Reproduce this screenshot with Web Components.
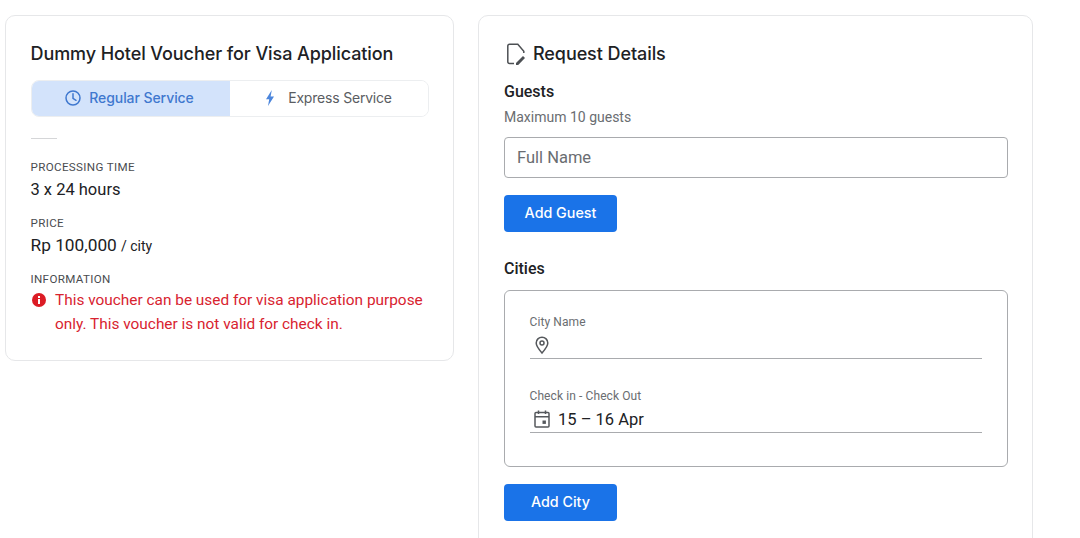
<!DOCTYPE html>
<html lang="en"><head><meta charset="utf-8"><title>Voucher</title>
<style>
html,body{margin:0;height:538px;overflow:hidden;background:#fff;font-family:Roboto,sans-serif;color:#202124}
</style></head><body>
<voucher-page>
  <voucher-card></voucher-card>
  <request-card></request-card>
</voucher-page>
<script>
const css=`*{box-sizing:border-box}:host{box-sizing:border-box}`;
function def(name,html){customElements.define(name,class extends HTMLElement{constructor(){super();this.attachShadow({mode:'open'}).innerHTML=html;}});}
def('voucher-page',`<style>${css}:host{display:flex;align-items:flex-start;gap:24px;padding:15px 0 0 5px;height:538px;overflow:hidden}</style><slot></slot>`);
def('info-block',`<style>${css}:host{display:block}
.l{font:400 11.6px/16px Roboto,sans-serif;letter-spacing:.35px;color:#4a4c50;height:16px}
.v{font:400 16.5px/24px Roboto,sans-serif;color:#202124;display:block;margin-top:3px;height:auto}
</style><div class="l"><slot name="label"></slot></div><div class="v"><slot></slot></div>`);
def('service-tabs',`<style>${css}:host{display:flex;height:37px;border:1px solid #eceef0;border-radius:8px;overflow:hidden;font:500 14px/20px Inter,Roboto,sans-serif}
div{display:flex;align-items:center;justify-content:center;gap:7.5px;padding-bottom:2px}
.a{background:#d3e3fb;color:#3f78cf;margin:-1px 0 -1px -1px;flex:0 0 199.5px;padding-right:3px;letter-spacing:-.07px}
.b{color:#5a5d62;background:#fff;gap:9px;flex:1 1 auto;font-weight:400;letter-spacing:-.2px;padding-right:5px}
svg{display:block;flex:none}
</style><div class="a"><svg width="18" height="18" viewBox="0 0 18 18" fill="none" stroke="#3f78cf" stroke-width="1.5"><circle cx="9" cy="9" r="7"/><path d="M9 4.8V9.4l3 1.9" stroke-linecap="round"/></svg><span>Regular Service</span></div>
<div class="b"><svg width="18" height="18" viewBox="0 0 18 18"><path d="M10.8 1 5 10.2H8.2L7 17 13 7.4H9.6Z" fill="#4c86dc"/></svg><span>Express Service</span></div>`);
def('voucher-card',`<style>${css}:host{display:block;flex:0 0 449px;height:346px;border:1px solid #e6e7e9;border-radius:10px;padding:25px 24px 0 24.5px;background:#fff}
h1{margin:0;font:500 18px/26px Inter,Roboto,sans-serif;color:#202124;letter-spacing:-.08px}
service-tabs{margin-top:13px}
hr{width:26px;height:1px;border:0;background:#d5d6d8;margin:21px 0 0}
info-block{margin-top:13px}
.first{margin-top:20px}
small{font-size:14px;line-height:1}
.price{font-size:17.3px;line-height:1}
.err{display:flex;gap:8.5px;color:#d8232f;font:400 15.4px/24px Roboto,sans-serif;margin-top:-2px}
.err svg{flex:none;margin-top:4px}
</style>
<h1>Dummy Hotel Voucher for Visa Application</h1>
<service-tabs></service-tabs>
<hr>
<info-block class="first"><span slot="label">PROCESSING TIME</span>3 x 24 hours</info-block>
<info-block><span slot="label">PRICE</span><span class="price">Rp 100,000</span> <small>/ city</small></info-block>
<info-block><span slot="label">INFORMATION</span><div class="err"><svg width="16" height="16" viewBox="0 0 16 16"><circle cx="8" cy="8" r="7" fill="#dc1c25"/><rect x="7" y="7" width="2" height="5" fill="#fff"/><rect x="7" y="4" width="2" height="2" fill="#fff"/></svg><span>This voucher can be used for visa application purpose only. This voucher is not valid for check in.</span></div></info-block>`);
def('blue-button',`<style>${css}:host{display:flex;align-items:center;justify-content:center;width:113px;height:37px;padding-bottom:2px;background:#1a73e8;color:#fff;border-radius:4px;font:500 14.3px/20px Inter,Roboto,sans-serif}</style><slot></slot>`);
def('line-field',`<style>${css}:host{display:block;height:45px;border-bottom:1px solid #a9abae}
.l{font:400 12px/16px Roboto,sans-serif;color:#6a6d71;height:16px;letter-spacing:.1px}
.r{display:flex;align-items:center;gap:7.5px;height:22px;margin-top:4px;padding-left:3px;font:400 16.5px/24px Roboto,sans-serif;color:#202124}
svg{display:block}
::slotted(.t){margin-top:2px}
</style><div class="l"><slot name="label"></slot></div><div class="r"><slot name="icon"></slot><slot></slot></div>`);
def('request-card',`<style>${css}:host{display:block;flex:0 0 555px;height:700px;border:1px solid #e6e7e9;border-radius:10px;padding:25px 24px 0 25px;background:#fff}
h2{display:flex;align-items:center;gap:6px;margin:0;font:500 18px/26px Inter,Roboto,sans-serif;color:#202124;letter-spacing:-.08px;padding-left:1px}
h3{margin:0;font:500 16px/22px Roboto,sans-serif;color:#202124}
.g{margin-top:14px}
.hint{font:400 14px/20px Roboto,sans-serif;color:#6a6d71;margin-top:4px}
.inp{height:41px;border:1px solid #a9abae;border-radius:4px;margin-top:10px;padding:0 12px;display:flex;align-items:center;font:400 16.5px/22px Roboto,sans-serif;color:#6a6d71}
blue-button{margin-top:17px}
.c{margin-top:26px}
.box{height:177px;border:1px solid #a9abae;border-radius:6px;margin-top:10px;padding:23px 25px 0 24.5px}
line-field+line-field{margin-top:29px}
</style>
<h2><svg width="22" height="24" viewBox="0 0 22 24" fill="none" stroke="#4d5054" stroke-width="1.5"><path d="M9 21.5H4.5Q2.8 21.5 2.8 19.8V4Q2.8 2.3 4.5 2.3H12.8L18.8 9.2V11"/><path d="M11 21 18 14 20 16 13.2 23H11Z" fill="#4d5054" stroke="none"/></svg><span>Request Details</span></h2>
<h3 class="g">Guests</h3>
<div class="hint">Maximum 10 guests</div>
<div class="inp">Full Name</div>
<blue-button>Add Guest</blue-button>
<h3 class="c">Cities</h3>
<div class="box">
<line-field><span slot="label">City Name</span><svg slot="icon" width="18" height="20" viewBox="0 0 18 20" fill="none" stroke="#55585c" stroke-width="1.5"><path d="M9 18C5.5 14 3.2 11 3.2 8a5.8 5.8 0 0 1 11.6 0C14.8 11 12.5 14 9 18Z"/><circle cx="9" cy="8" r="2"/></svg></line-field>
<line-field><span slot="label">Check in - Check Out</span><svg slot="icon" width="18" height="20" viewBox="0 0 18 20" fill="none" stroke="#55585c" stroke-width="1.5"><rect x="2" y="3.5" width="14" height="14.5" rx="1"/><path d="M2 7.8H16M5.5 1.5V5M12.5 1.5V5"/><rect x="9.5" y="11.5" width="3.4" height="3.4" fill="#55585c" stroke="none"/></svg><span class="t">15 – 16 Apr</span></line-field>
</div>
<blue-button>Add City</blue-button>`);
</script>
</body></html>
